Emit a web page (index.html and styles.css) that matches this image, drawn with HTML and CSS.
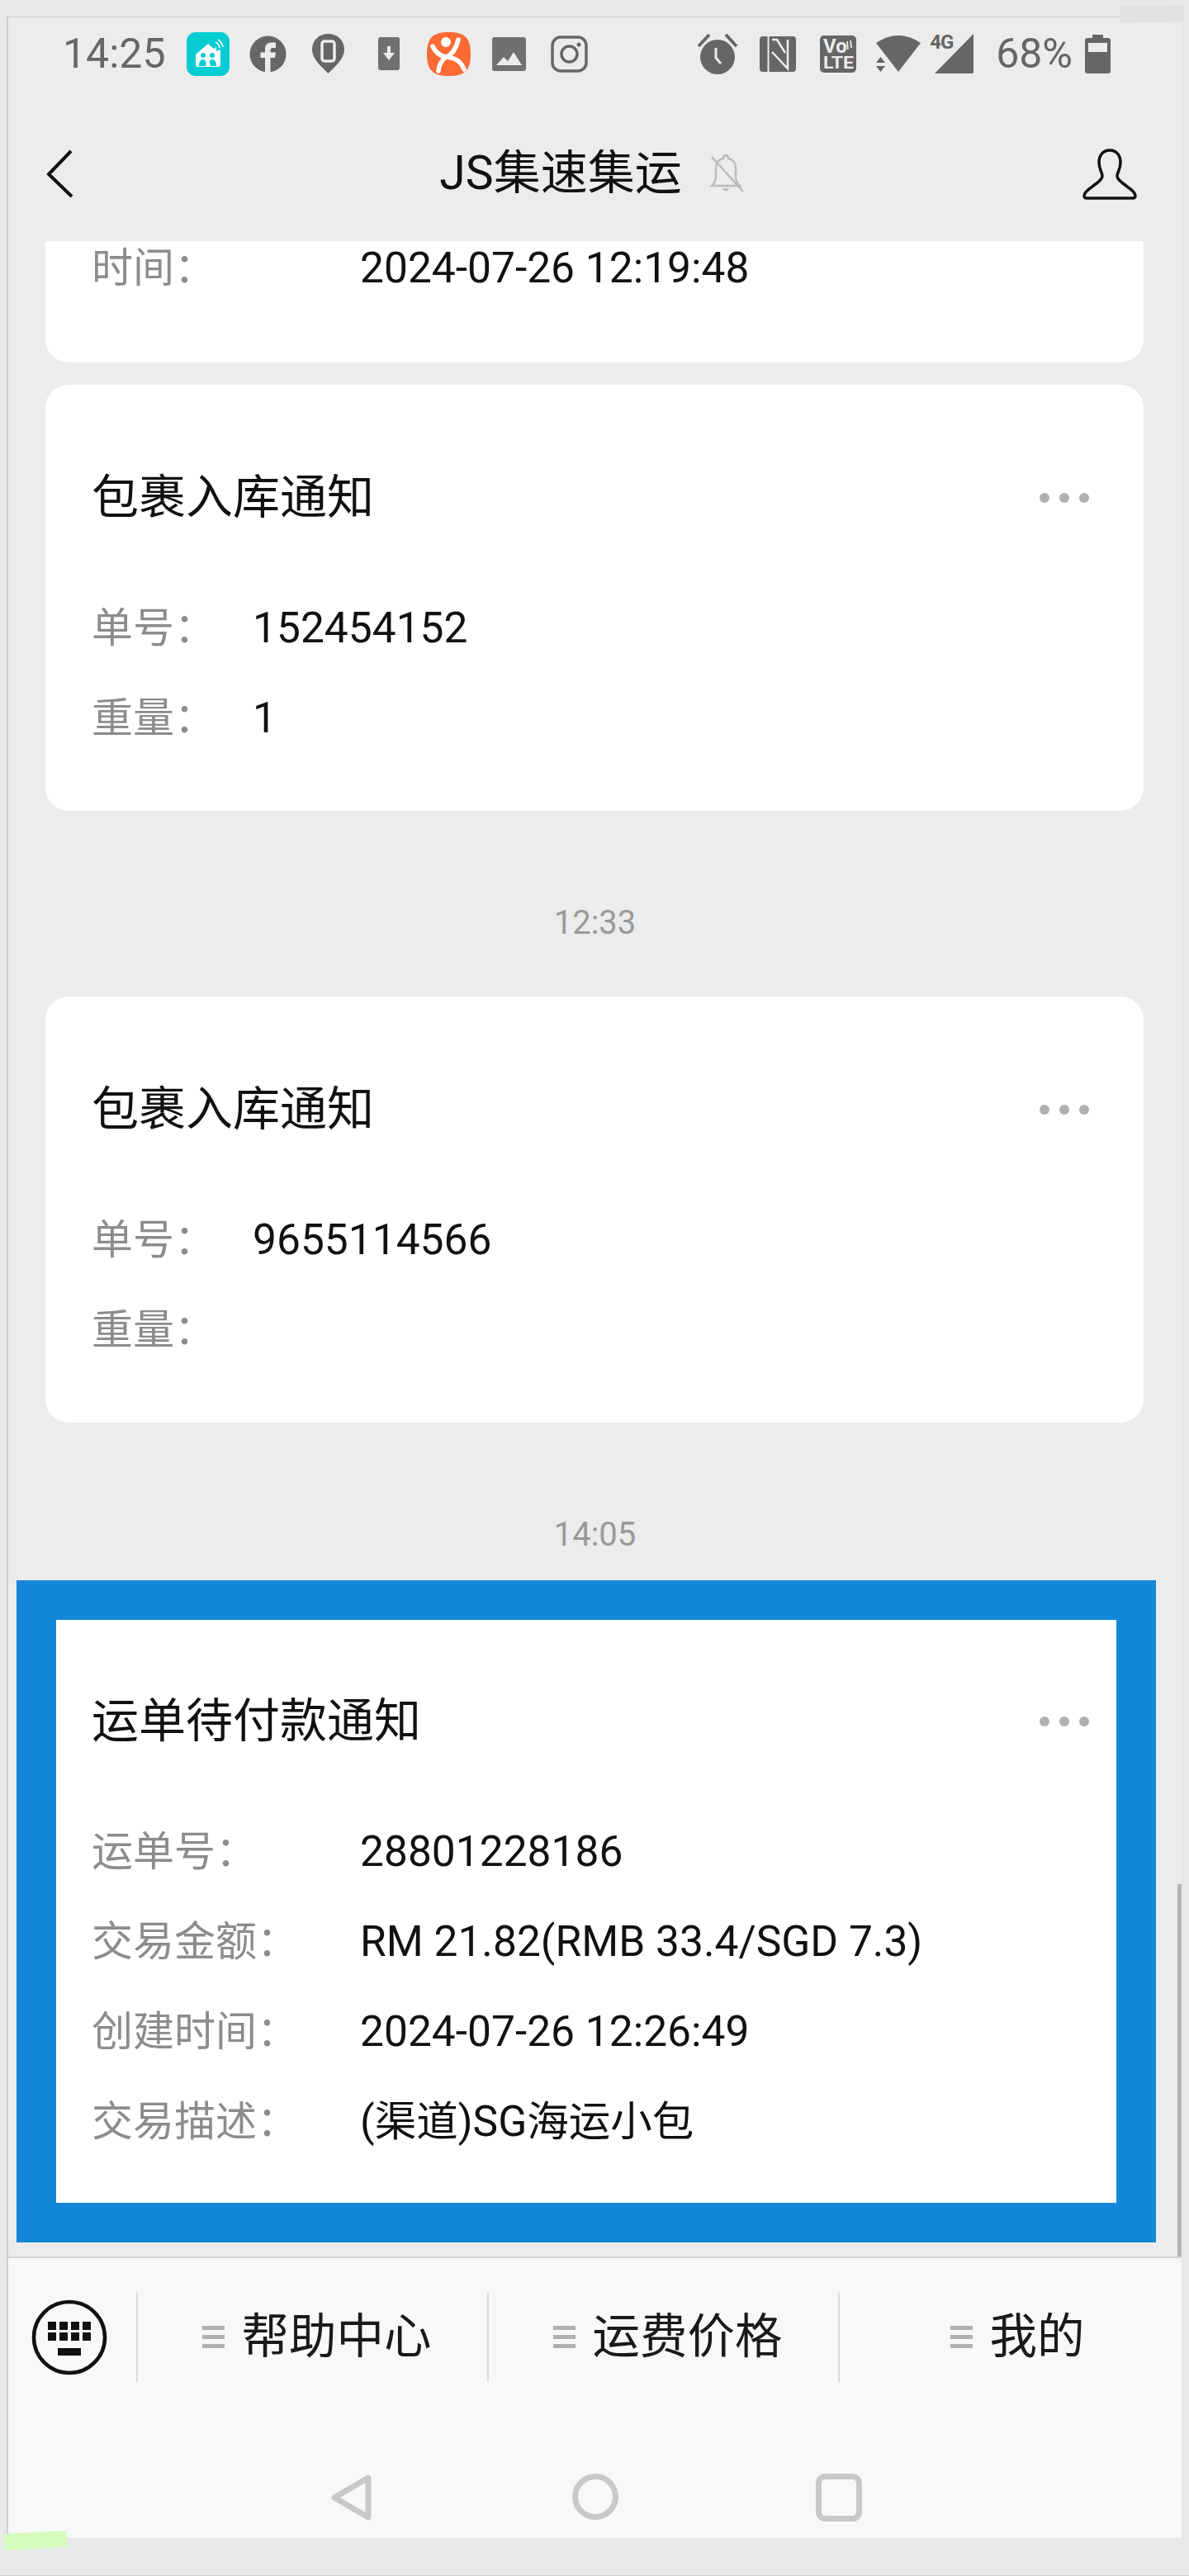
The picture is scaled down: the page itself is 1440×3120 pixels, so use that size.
FILE: index.html
```html
<!DOCTYPE html>
<html lang="zh-CN">
<head>
  <meta charset="UTF-8"/>
  <title>JS集速集运</title>
  <link rel="stylesheet" href="styles.css">
</head>
<body>
  <div class="tape tape-top"></div>
  <div class="tape tape-bottom"></div>

  <div class="screen">
    <!-- Android status bar -->
    <div class="status">
      <div class="status-left">
        <span class="clock">14:25</span>
        <span class="slot">
          <svg width="52" height="53" viewBox="0 0 52 53">
            <rect width="52" height="53" rx="11" fill="#03cdd2"/>
            <path d="M26 14 L11 27 V39 Q11 42 14 42 H38 Q41 42 41 39 V21 L36 23 V18 L33 20 Z" fill="#fff"/>
            <circle cx="20" cy="28" r="3" fill="#03cdd2"/>
            <circle cx="31" cy="28" r="3" fill="#03cdd2"/>
            <path d="M15 41 Q15 33 20 33 Q24 33 24 41 Z M27 41 Q27 33 31 33 Q36 33 36 41 Z" fill="#03cdd2"/>
            <circle cx="26" cy="33" r="2.400" fill="#fff"/>
            <path d="M23 42 Q23 36 26 36 Q29 36 29 42 Z" fill="#fff"/>
            <path d="M35 12 Q39 14 40 19 M38 9 Q43 12 44 18" fill="none" stroke="#fff" stroke-width="1.600"/>
          </svg>
        </span>
        <span class="slot">
          <svg width="45" height="45" viewBox="0 0 45 45">
            <circle cx="22.500" cy="22.500" r="22" fill="#666"/>
            <path d="M19 45 V27 H13.500 V20.500 H19 V16 Q19 8.500 27 8.500 H32 V15 H28.500 Q25.500 15 25.500 18 V20.500 H32 L31 27 H25.500 V45 Z" fill="#ececec"/>
          </svg>
        </span>
        <span class="slot">
          <svg width="39" height="48" viewBox="0 0 39 48">
            <path d="M19.500 0 C8 0 0 8 0 19 C0 31 12 40 19.500 48 C27 40 39 31 39 19 C39 8 31 0 19.500 0 Z" fill="#666"/>
            <rect x="12" y="9" width="15" height="24" rx="3" fill="none" stroke="#ececec" stroke-width="3.500"/>
          </svg>
        </span>
        <span class="slot">
          <svg width="26" height="40" viewBox="0 0 26 40">
            <rect width="26" height="40" rx="3" fill="#707070"/>
            <path d="M11 11 H15 V19 H20 L13 28 L6 19 H11 Z" fill="#ececec"/>
          </svg>
        </span>
        <span class="slot">
          <svg width="53" height="53" viewBox="0 0 53 53">
            <path d="M26.500 0 C46 0 53 7 53 26.500 C53 46 46 53 26.500 53 C7 53 0 46 0 26.500 C0 7 7 0 26.500 0 Z" fill="#fd6a33"/>
            <circle cx="23" cy="12" r="6" fill="#fff"/>
            <path d="M7 17 Q12 28 23 30 Q34 26 38 9 M23 30 Q15 36 14 47 M23 30 Q40 31 45 45" fill="none" stroke="#fff" stroke-width="5.500" stroke-linecap="round"/>
          </svg>
        </span>
        <span class="slot">
          <svg width="41" height="41" viewBox="0 0 41 41">
            <rect width="41" height="41" rx="3" fill="#707070"/>
            <path d="M5 34 L14 24 L19 29 L26 18 L36 34 Z" fill="#ececec"/>
          </svg>
        </span>
        <span class="slot">
          <svg width="45" height="45" viewBox="0 0 45 45" fill="none" stroke="#666" stroke-width="3.500">
            <rect x="2" y="2" width="41" height="41" rx="10"/>
            <circle cx="22.500" cy="22.500" r="9.500"/>
            <circle cx="34" cy="11" r="2.500" fill="#666" stroke="none"/>
          </svg>
        </span>
      </div>
      <div class="status-right">
        <span class="slot">
          <svg width="50" height="50" viewBox="0 0 50 50">
            <circle cx="25" cy="29" r="21" fill="#666"/>
            <path d="M2 16 L15 2 M48 16 L35 2" stroke="#666" stroke-width="4"/>
            <path d="M23 18 V30 L29 37" fill="none" stroke="#ececec" stroke-width="3"/>
          </svg>
        </span>
        <span class="slot">
          <svg width="44" height="43" viewBox="0 0 44 43">
            <rect width="44" height="43" rx="4" fill="#666"/>
            <path d="M10.500 0 V43" stroke="#ececec" stroke-width="2"/>
            <path d="M15 4 H21 L31 20 M15 19 L34 39 V4" fill="none" stroke="#ececec" stroke-width="2.500"/>
          </svg>
        </span>
        <span class="slot">
          <svg width="44" height="45" viewBox="0 0 44 45">
            <rect width="44" height="45" rx="5" fill="#666"/>
            <text class="volte-top" x="4" y="21">Vo</text>
            <text class="volte-bottom" x="4" y="40" textLength="37" lengthAdjust="spacingAndGlyphs">LTE</text>
            <path d="M33 7 L34 17 M37 6 L38 15" stroke="#ececec" stroke-width="1.800"/>
          </svg>
        </span>
        <span class="slot">
          <svg width="54" height="44" viewBox="0 0 54 44">
            <path d="M0 9 Q27 -9 54 9 L27 44 Z" fill="#666"/>
            <path d="M0 33 L5.500 26 L11 33 Z M0 37 H11 L5.500 44 Z" fill="#666"/>
          </svg>
        </span>
        <span class="signal">
          <span class="net">4G</span>
          <svg width="54" height="49" viewBox="0 0 54 49">
            <path d="M53 0 V46 Q53 48 51 48 H6 Z" fill="#666"/>
          </svg>
        </span>
        <span class="battery-pct">68%</span>
        <svg width="31" height="47" viewBox="0 0 31 47">
          <path d="M9 0 H22 V4 H28 Q31 4 31 7 V44 Q31 47 28 47 H3 Q0 47 0 44 V7 Q0 4 3 4 H9 Z" fill="#666"/>
          <rect x="4" y="10" width="23" height="11" fill="#ececec"/>
        </svg>
      </div>
    </div>

    <!-- Title bar -->
    <div class="topbar">
      <svg class="back" width="34" height="60" viewBox="0 0 34 60">
        <path d="M30 2 L3 30 L31 57" fill="none" stroke="#111" stroke-width="4"/>
      </svg>
      <div class="topbar-title">
        <span>JS集速集运</span>
        <svg width="42" height="46" viewBox="0 0 42 46" fill="none" stroke="#bbb" stroke-width="2.500">
          <path d="M3 38 Q8 34 8 26 V16 Q8 7 17 5 Q17 1 20 1 Q23 1 23 5 Q32 7 32 16 V26 Q32 34 37 38 Z"/>
          <path d="M17 41 Q20 45 23 41"/>
          <path d="M3 3 L41 45"/>
        </svg>
      </div>
      <svg class="person" width="66" height="62" viewBox="0 0 66 62">
        <path d="M33 2 C24 2 20 9 20 17 C20 25 24 29 24 33 C24 38 18 41 12 46 C6 50 2 54 2 57 Q2 60 5 60 H61 Q64 60 64 57 C64 54 60 50 54 46 C48 41 42 38 42 33 C42 29 46 25 46 17 C46 9 42 2 33 2 Z" fill="none" stroke="#111" stroke-width="3.500"/>
      </svg>
    </div>

    <!-- Chat, scrolled to the bottom -->
    <div class="chat">
      <div class="scrollbar"></div>

      <div class="card card-wide">
        <div class="row"><span class="label">时间：</span><span class="value">2024-07-26 12:19:48</span></div>
      </div>

      <div class="card card-gap">
        <div class="card-head">
          <span class="card-title">包裹入库通知</span>
          <span class="dots"><i></i><i></i><i></i></span>
        </div>
        <div class="row"><span class="label">单号：</span><span class="value">152454152</span></div>
        <div class="row"><span class="label">重量：</span><span class="value">1</span></div>
      </div>

      <div class="time">12:33</div>

      <div class="card">
        <div class="card-head">
          <span class="card-title">包裹入库通知</span>
          <span class="dots"><i></i><i></i><i></i></span>
        </div>
        <div class="row"><span class="label">单号：</span><span class="value">9655114566</span></div>
        <div class="row"><span class="label">重量：</span><span class="value"></span></div>
      </div>

      <div class="time">14:05</div>

      <div class="marked">
        <div class="card card-wide card-marked">
          <div class="card-head">
            <span class="card-title">运单待付款通知</span>
            <span class="dots"><i></i><i></i><i></i></span>
          </div>
          <div class="row"><span class="label">运单号：</span><span class="value">28801228186</span></div>
          <div class="row"><span class="label">交易金额：</span><span class="value">RM 21.82(RMB 33.4/SGD 7.3)</span></div>
          <div class="row"><span class="label">创建时间：</span><span class="value">2024-07-26 12:26:49</span></div>
          <div class="row"><span class="label">交易描述：</span><span class="value">(<span class="cjk">渠道</span>)SG<span class="cjk">海运小包</span></span></div>
        </div>
      </div>
    </div>

    <!-- Menu and Android nav -->
    <div class="footer">
      <div class="menu">
        <div class="menu-keyboard">
          <svg width="92" height="92" viewBox="0 0 92 92">
            <circle cx="46" cy="46" r="43" fill="none" stroke="#111" stroke-width="4.500"/>
            <g fill="#111">
              <rect x="20" y="27" width="10" height="10"/><rect x="34" y="27" width="10" height="10"/>
              <rect x="48" y="27" width="10" height="10"/><rect x="62" y="27" width="10" height="10"/>
              <rect x="20" y="40" width="10" height="10"/><rect x="34" y="40" width="10" height="10"/>
              <rect x="48" y="40" width="10" height="10"/><rect x="62" y="40" width="10" height="10"/>
              <rect x="32" y="59" width="28" height="9"/>
            </g>
          </svg>
        </div>
        <div class="menu-item"><span class="burger"><i></i><i></i><i></i></span>帮助中心</div>
        <div class="menu-item"><span class="burger"><i></i><i></i><i></i></span>运费价格</div>
        <div class="menu-item menu-item-last"><span class="burger"><i></i><i></i><i></i></span>我的</div>
      </div>
      <div class="nav">
        <span class="nav-slot">
          <svg width="52" height="58" viewBox="0 0 52 58">
            <path d="M46 5 L5 29 L46 53 Z" fill="none" stroke="#c8c8c8" stroke-width="7" stroke-linejoin="round"/>
          </svg>
        </span>
        <span class="nav-slot">
          <svg width="56" height="56" viewBox="0 0 56 56">
            <circle cx="28" cy="28" r="24.500" fill="none" stroke="#c8c8c8" stroke-width="7"/>
          </svg>
        </span>
        <span class="nav-slot">
          <svg width="56" height="58" viewBox="0 0 56 58">
            <rect x="3.500" y="3.500" width="49" height="51" rx="8" fill="none" stroke="#c8c8c8" stroke-width="7"/>
          </svg>
        </span>
      </div>
    </div>
  </div>
</body>
</html>
```

FILE: styles.css
```css
/* Global styles */
* {
  margin: 0;
  padding: 0;
  box-sizing: border-box;
}

html {
  height: 3120px;
  overflow: hidden;
}

body {
  position: relative;
  height: 3120px;
  padding-top: 20px;
  background: #e8e8e8;
  border-bottom: 1px solid #cccccc;
  font-family: Roboto, "Noto Sans CJK SC", sans-serif;
  line-height: 1.2;
}

/* Bits of tape on the photographed print */
.tape {
  position: absolute;
  z-index: 2;
}

.tape-top {
  left: 1357px;
  top: 7px;
  width: 77px;
  height: 20px;
  background: #e3e0e0;
  transform: rotate(-1deg);
}

.tape-bottom {
  left: 5px;
  top: 3067px;
  width: 76px;
  height: 20px;
  background: #d6fbbe;
  transform: rotate(-3deg);
}

.screen {
  display: flex;
  flex-direction: column;
  width: 1423px;
  height: 3054px;
  margin-left: 8px;
  background: #ececec;
  border-left: 2px solid #cfcfcf;
  border-top: 1px solid #cfcfcf;
}

/* Status bar */
.status {
  display: flex;
  justify-content: space-between;
  align-items: center;
  height: 88px;
  padding: 0 86px 0 66px;
  color: #666;
  font-size: 50px;
}

.status-left,
.status-right {
  display: flex;
  align-items: center;
}

.clock {
  width: 139px;
}

.slot {
  display: flex;
  justify-content: center;
  width: 73px;
}

.signal {
  position: relative;
  display: flex;
  margin-left: 2px;
}

.battery-pct {
  margin: 0 15px 0 26px;
}

.volte-top {
  font: bold 24px Roboto, sans-serif;
  fill: #ececec;
}

.volte-bottom {
  font: bold 21px Roboto, sans-serif;
  fill: #ececec;
}

/* 4G sits over the corner of the signal triangle */
.net {
  position: absolute;
  left: 0;
  top: -4px;
  font-size: 24px;
  font-weight: bold;
  letter-spacing: -1px;
}

/* Title bar */
.topbar {
  display: grid;
  grid-template-columns: 1fr auto 1fr;
  align-items: center;
  height: 183px;
  padding: 20px 54px 0 46px;
}

.back {
  justify-self: start;
}

.person {
  justify-self: end;
}

.topbar-title {
  display: flex;
  align-items: center;
  gap: 33px;
  color: #111;
  font-size: 57px;
}

/* Chat */
.chat {
  position: relative;
  flex: 1;
  display: flex;
  flex-direction: column;
  justify-content: flex-end;
  overflow: hidden;
  padding-bottom: 17px;
}

.scrollbar {
  position: absolute;
  right: 0;
  bottom: 0;
  width: 5px;
  height: 451px;
  background: #b4b4b4;
}

.card {
  flex-shrink: 0;
  margin: 0 46px 0 45px;
  padding: 77px 66px 58px 56px;
  background: #fff;
  border-radius: 28px;
}

.card-wide {
  padding-top: 0;
  padding-bottom: 60px;
}

.card-wide .label {
  width: 325px;
}

.card-gap {
  margin-top: 27px;
}

.card-head {
  display: flex;
  justify-content: space-between;
  align-items: center;
  height: 120px;
  margin-bottom: 43px;
}

.card-title {
  color: #111;
  font-size: 57px;
}

.dots {
  display: flex;
  gap: 12px;
}

.dots i {
  width: 12px;
  height: 12px;
  border-radius: 50%;
  background: #b0b0b0;
}

.row {
  display: flex;
  align-items: center;
  height: 109px;
  font-size: 51.5px;
}

.label {
  flex-shrink: 0;
  width: 195px;
  color: #8c8c8c;
  font-size: 50px;
}

.value {
  color: #111;
}

.cjk {
  font-size: 50.5px;
}

.time {
  flex-shrink: 0;
  padding: 114px 0 67px;
  color: #999;
  font-size: 40px;
  line-height: 44px;
  text-align: center;
}

/* Blue highlight round the last card */
.marked {
  flex-shrink: 0;
  margin: -34px 31px 0 10px;
  border: 48px solid #1587d9;
}

.card-marked {
  margin: 0;
  padding: 63px 33px 44px 43px;
  border-radius: 0;
}

/* Footer */
.footer {
  height: 341px;
  padding-top: 41px;
  background: #f8f8f8;
  border-top: 2px solid #d2d2d2;
}

.menu {
  display: grid;
  grid-template-columns: 155px 425px 425px 1fr;
  height: 109px;
}

.menu-keyboard {
  display: flex;
  justify-content: center;
  align-items: center;
  padding-right: 8px;
}

.menu-item {
  display: flex;
  justify-content: center;
  align-items: center;
  gap: 21px;
  padding-left: 10px;
  border-left: 2px solid #dcdcdc;
  color: #1a1a1a;
  font-size: 57.5px;
}

.menu-item-last {
  padding-left: 16px;
}

.burger {
  display: flex;
  flex-direction: column;
  gap: 6px;
}

.burger i {
  width: 27px;
  height: 5px;
  background: #b0b0b0;
}

.nav {
  display: flex;
  justify-content: center;
  margin-top: 111px;
}

.nav-slot {
  display: flex;
  justify-content: center;
  width: 295px;
}
```
